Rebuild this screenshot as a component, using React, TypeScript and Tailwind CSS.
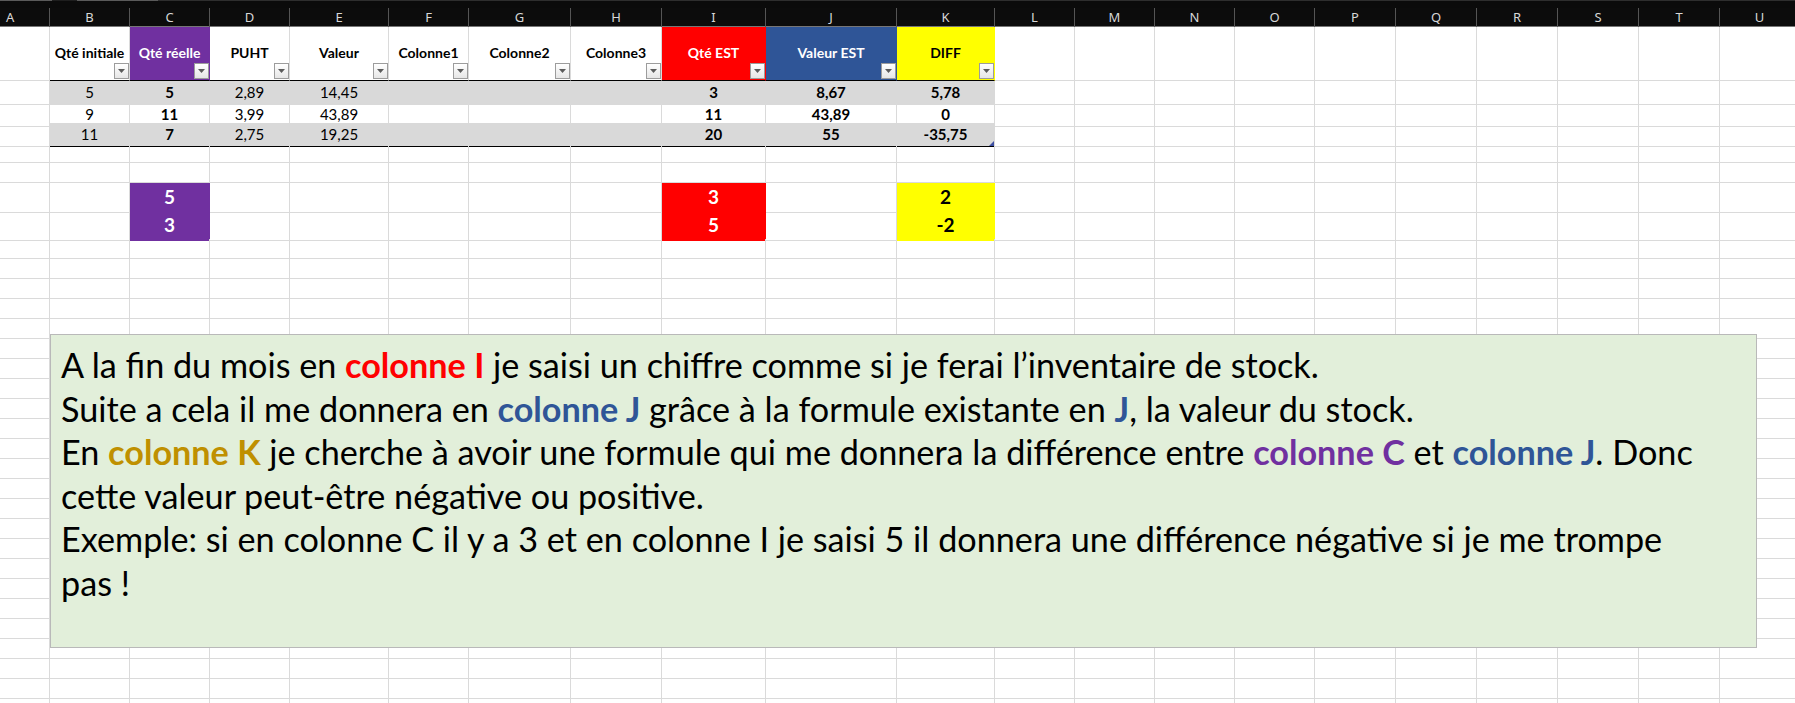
import React from "react";

const GRID =
  "grid grid-cols-[50px_80px_80px_80px_99px_80px_102px_91px_104px_131px_98px_80px_80px_80px_80px_81px_81px_81px_81px_81px_80px]";

const LETTERS = "ABCDEFGHIJKLMNOPQRSTU".split("");

const CELL = "relative flex items-center justify-center border-r border-b border-[#dadada]";

function FilterButton() {
  return (
    <div className="absolute right-0 bottom-[1px] flex h-[16px] w-[15px] items-center justify-center border border-[#9c9c9c] bg-gradient-to-b from-white to-[#e6e6e6]">
      <svg width="7" height="4" viewBox="0 0 7 4">
        <polygon points="0,0 7,0 3.5,4" fill="#5b5b5b" />
      </svg>
    </div>
  );
}

const headers = [
  { text: "Qté initiale", cls: "bg-white text-black" },
  { text: "Qté réelle", cls: "bg-[#7030a0] text-white border-r-[#7030a0]" },
  { text: "PUHT", cls: "bg-white text-black" },
  { text: "Valeur", cls: "bg-white text-black" },
  { text: "Colonne1", cls: "bg-white text-black" },
  { text: "Colonne2", cls: "bg-white text-black" },
  { text: "Colonne3", cls: "bg-white text-black" },
  { text: "Qté EST", cls: "bg-[#ff0000] text-white border-r-[#ff0000]" },
  { text: "Valeur EST", cls: "bg-[#2f5597] text-white border-r-[#2f5597]" },
  { text: "DIFF", cls: "bg-[#ffff00] text-black border-r-[#ffff00]" },
];

const dataRows = [
  { shade: true, h: "h-[22px]", vals: ["5", "5", "2,89", "14,45", "", "", "", "3", "8,67", "5,78"] },
  { shade: false, h: "h-[20px]", vals: ["9", "11", "3,99", "43,89", "", "", "", "11", "43,89", "0"] },
  { shade: true, h: "h-[20px]", vals: ["11", "7", "2,75", "19,25", "", "", "", "20", "55", "-35,75"] },
];

const boldCols = [1, 7, 8, 9];

// colored cells of the two summary rows, keyed by column index
const summaryFill: Record<number, string> = {
  2: "bg-[#7030a0] border-r-[#7030a0] border-b-[#7030a0] text-white",
  8: "bg-[#ff0000] border-r-[#ff0000] border-b-[#ff0000] text-white",
  10: "bg-[#ffff00] border-r-[#ffff00] border-b-[#ffff00] text-black",
};

const summaryRows = [
  { 2: "5", 8: "3", 10: "2" } as Record<number, string>,
  { 2: "3", 8: "5", 10: "-2" } as Record<number, string>,
];

function EmptyCells({ from }: { from: number }) {
  return (
    <>
      {LETTERS.slice(from).map((l) => (
        <div key={l} className={CELL} />
      ))}
    </>
  );
}

export default function App() {
  const emptyRows = Array.from({ length: 24 });

  return (
    <div className="relative h-[703px] w-[1795px] overflow-hidden bg-white font-['Lato',sans-serif]">
      {/* top strip */}
      <div className="flex h-[8px] bg-[#0b0b0b]">
        <div className="h-[1px] w-[52px] bg-[#5a5a5a]" />
        <div className="h-[1px] w-[25px] bg-[#1e1e1e]" />
        <div className="h-[1px] w-[81px] bg-[#5a5a5a]" />
        <div className="h-[1px] flex-1 bg-[#2e2e2e]" />
      </div>

      {/* column letters */}
      <div className={`${GRID} h-[19px] bg-[#0c0c0c] border-b border-[#777]`}>
        {LETTERS.map((l, i) => (
          <div
            key={l}
            className={`flex items-center border-r border-[#555] font-['Noto_Sans',sans-serif] text-[13px] text-[#d8d8d8] ${
              i === 0 ? "justify-start pl-[6px]" : "justify-center"
            }`}
          >
            {l}
          </div>
        ))}
      </div>

      {/* table header */}
      <div className={`${GRID} h-[54px]`}>
        <div className={CELL} />
        {headers.map((h) => (
          <div key={h.text} className={`${CELL} ${h.cls} border-b-black pb-[2px] text-[14px] font-bold whitespace-nowrap`}>
            {h.text}
            <FilterButton />
          </div>
        ))}
        <EmptyCells from={11} />
      </div>

      {/* table body */}
      {dataRows.map((r, ri) => (
        <div key={ri} className={`${GRID} ${r.h}`}>
          <div className={CELL} />
          {r.vals.map((v, ci) => (
            <div
              key={ci}
              className={`${CELL} text-[15px] text-black ${
                r.shade ? "bg-[#d9d9d9] border-r-[#d9d9d9] border-b-[#d9d9d9]" : ""
              } ${ri === 2 ? "border-b-black" : ""} ${boldCols.includes(ci) ? "font-bold" : ""}`}
            >
              {v}
              {ri === 2 && ci === 9 && (
                <svg className="absolute right-0 bottom-0" width="5" height="5" viewBox="0 0 5 5">
                  <polygon points="5,0 5,5 0,5" fill="#3d4fa3" />
                </svg>
              )}
            </div>
          ))}
          <EmptyCells from={11} />
        </div>
      ))}

      {/* spacer rows */}
      <div className={`${GRID} h-[20px]`}>
        <EmptyCells from={0} />
      </div>
      <div className={`${GRID} h-[20px]`}>
        <EmptyCells from={0} />
      </div>

      {/* summary rows */}
      {summaryRows.map((vals, ri) => (
        <div key={ri} className={`${GRID} h-[28px]`}>
          {LETTERS.map((l, ci) => (
            <div key={l} className={`${CELL} text-[19px] font-bold ${summaryFill[ci] ?? ""}`}>
              {vals[ci] ?? ""}
            </div>
          ))}
        </div>
      ))}

      {emptyRows.map((_, i) => (
        <div key={i} className={`${GRID} h-[20px]`}>
          <EmptyCells from={0} />
        </div>
      ))}

      {/* note text box */}
      <div className="absolute top-[334px] left-[50px] h-[314px] w-[1707px] border border-[#b9b9b9] bg-[#e2efda] pt-[8px] pl-[10px] text-[34.2px] leading-[43.5px] text-black">
        <div className="whitespace-nowrap">
          A la fin du mois en <b className="text-[#ff0000]">colonne I</b> je saisi un chiffre comme si je ferai l’inventaire de stock.
        </div>
        <div className="whitespace-nowrap">
          Suite a cela il me donnera en <b className="text-[#2f5597]">colonne J</b> grâce à la formule existante en{" "}
          <b className="text-[#2f5597]">J</b>, la valeur du stock.
        </div>
        <div className="whitespace-nowrap">
          En <b className="text-[#bf9000]">colonne K</b> je cherche à avoir une formule qui me donnera la différence entre{" "}
          <b className="text-[#7030a0]">colonne C</b> et <b className="text-[#2f5597]">colonne J</b>. Donc
        </div>
        <div className="whitespace-nowrap">cette valeur peut-être négative ou positive.</div>
        <div className="whitespace-nowrap">
          Exemple: si en colonne C il y a 3 et en colonne I je saisi 5 il donnera une différence négative si je me trompe
        </div>
        <div className="whitespace-nowrap">pas !</div>
      </div>
    </div>
  );
}
